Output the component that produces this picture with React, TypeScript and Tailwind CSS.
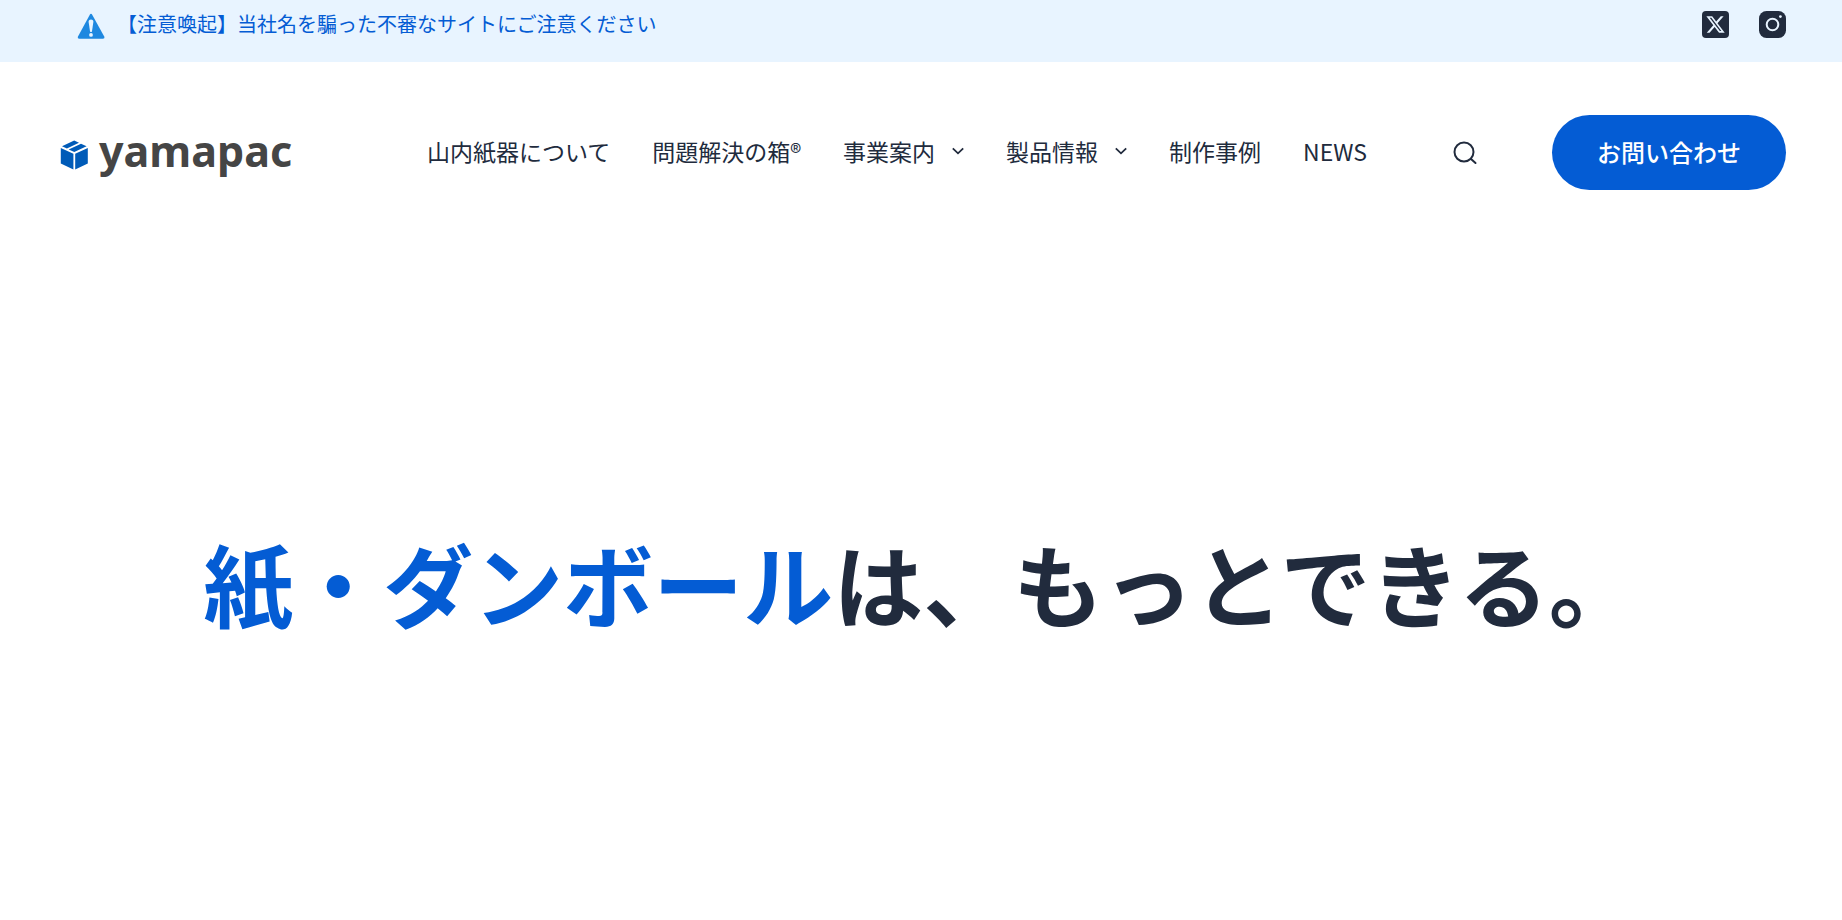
import React from 'react';

const navItems = [
  { label: '山内紙器について', hasMenu: false },
  { label: '問題解決の箱®', hasMenu: false },
  { label: '事業案内', hasMenu: true },
  { label: '製品情報', hasMenu: true },
  { label: '制作事例', hasMenu: false },
  { label: 'NEWS', hasMenu: false },
];

const WarningIcon: React.FC = () => (
  <svg className="w-7 h-7 shrink-0" viewBox="0 0 28 28" fill="none" aria-hidden="true">
    <path d="M12.800 2.700Q14 .8 15.200 2.700L27.200 24.600Q28 26.800 25.800 26.800H2.400Q.2 26.800 1 24.600Z" fill="#1e88e0" />
    <path d="M11.600 9.800c0-3 4.800-3 4.800 0L15 19.200c-.2 1.200-1.800 1.200-2 0Z" fill="#e8f4ff" />
    <circle cx="14" cy="22.900" r="1.900" fill="#e8f4ff" />
  </svg>
);

const XIcon: React.FC = () => (
  <svg className="w-[27px] h-[27px]" viewBox="0 0 27 27" aria-hidden="true">
    <rect width="27" height="27" rx="4" fill="#212b3d" />
    <g transform="translate(3.300 3.300) scale(.85)">
      <path
        d="M18.244 2.250h3.308l-7.227 8.260 8.502 11.240H16.170l-5.214-6.817L4.990 21.750H1.680l7.730-8.835L1.254 2.250H8.080l4.713 6.231zm-1.161 17.520h1.833L7.084 4.126H5.117z"
        fill="#e8f4ff"
      />
    </g>
  </svg>
);

const InstagramIcon: React.FC = () => (
  <svg className="w-[27px] h-[27px]" viewBox="0 0 27 27" aria-hidden="true">
    <rect width="27" height="27" rx="7.500" fill="#212b3d" />
    <circle cx="13.500" cy="13.500" r="5.800" fill="none" stroke="#e8f4ff" strokeWidth="2" />
    <circle cx="21.400" cy="5.600" r="1.400" fill="#e8f4ff" />
  </svg>
);

const ChevronIcon: React.FC = () => (
  <svg className="ml-[17px] w-3 h-3" viewBox="0 0 12 12" fill="none" stroke="currentColor" strokeWidth="1.800" aria-hidden="true">
    <path d="m.8 3.300 5.200 5 5.200-5" />
  </svg>
);

const SearchIcon: React.FC = () => (
  <svg className="w-6 h-6" viewBox="0 0 24 24" fill="none" stroke="#212b3d" strokeWidth="2" strokeLinecap="round" aria-hidden="true">
    <circle cx="11" cy="11" r="9.500" />
    <path d="m18 18 4.500 4" />
  </svg>
);

const Logo: React.FC = () => (
  <a href="#" className="flex items-center gap-2.5 text-[#454545]" aria-label="yamapac">
    <svg className="mt-1 w-[29px] h-[30px]" viewBox="0 0 29 30" fill="#005bb8" aria-hidden="true">
      <path d="M2 6.300 14.200.6 19 2.800 6.900 8.500ZM8.700 9.400 21 3.700 26.600 6.200 14.300 12Z" />
      <path d="M.8 8 13.400 13.800V29.400L.8 23.500ZM27.800 8 15.200 13.800V29.400L27.800 23.500Z" />
    </svg>
    <span className="pb-1 font-['Noto_Sans'] text-[43px] leading-none font-bold">yamapac</span>
  </a>
);

const App: React.FC = () => {
  return (
    <div className="min-h-screen flex flex-col bg-white text-[#212b3d] font-['Noto_Sans_CJK_JP',sans-serif]">
      <div className="flex items-start justify-between bg-[#e8f4ff] pl-[77px] pr-14 pt-[11px] h-[62px]">
        <a href="#" className="flex items-start gap-3 pt-px text-xl leading-6 text-[#045cd4]">
          <WarningIcon />
          <span>【注意喚起】当社名を騙った不審なサイトにご注意ください</span>
        </a>
        <div className="flex items-center gap-[30px]">
          <a href="#" aria-label="X"><XIcon /></a>
          <a href="#" aria-label="Instagram"><InstagramIcon /></a>
        </div>
      </div>

      <header className="flex items-center pl-[60px] pr-14 h-[181px]">
        <Logo />
        <nav className="ml-auto flex items-center gap-[42px] pb-1">
          {navItems.map((item) => (
            <a key={item.label} href="#" className="flex items-center text-[23px] leading-8 whitespace-nowrap">
              {item.label}
              {item.hasMenu && <ChevronIcon />}
            </a>
          ))}
        </nav>
        <button type="button" className="ml-[86px]" aria-label="検索">
          <SearchIcon />
        </button>
        <a href="#" className="ml-[75px] flex items-center rounded-full bg-[#045cd4] px-[45px] pb-0.5 h-[75px] text-2xl font-medium text-white whitespace-nowrap">
          お問い合わせ
        </a>
      </header>

      <main className="flex-1 flex items-center justify-center">
        <h1 className="text-[90px] leading-none font-bold whitespace-nowrap">
          <span className="text-[#045cd4]">紙・ダンボール</span>は、もっとできる。
        </h1>
      </main>
    </div>
  );
};

export default App;
